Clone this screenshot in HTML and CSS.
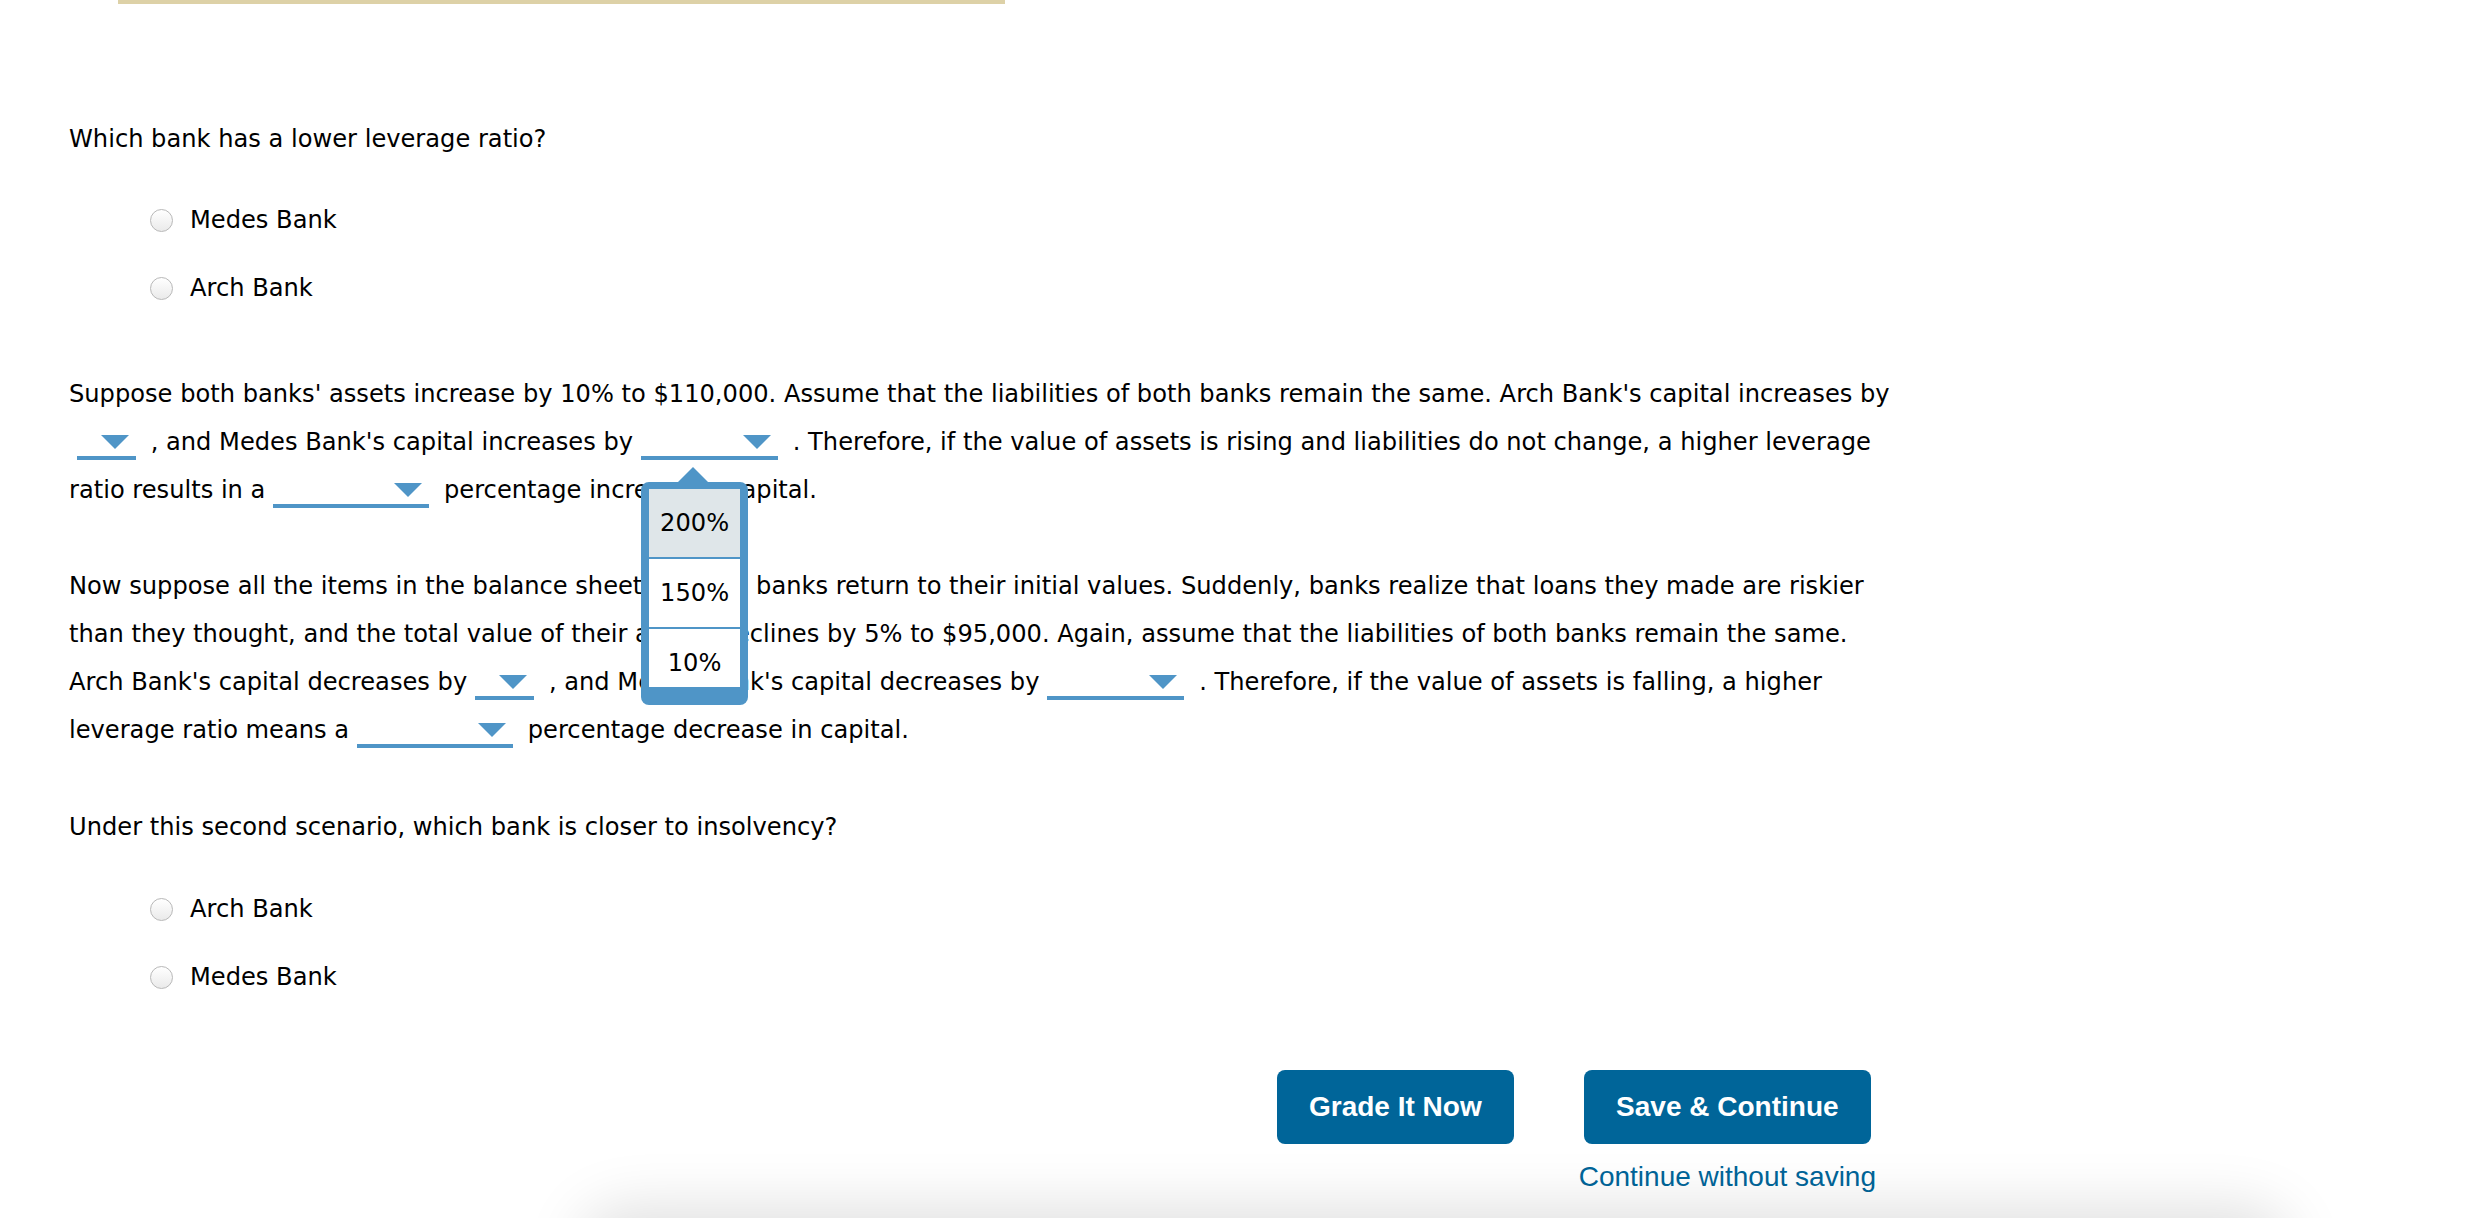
FILE: index.html
```html
<!DOCTYPE html>
<html lang="en">
<head>
    <meta charset="UTF-8">
    <meta name="viewport" content="width=device-width, initial-scale=1.0">
    <title>Bank Leverage</title>
    <link rel="stylesheet" href="styles.css">
</head>
<body>
    <div class="header-rule"></div>

    <main class="question">
        <p class="prompt">Which bank has a lower leverage ratio?</p>
        <ul class="choices">
            <li><input type="radio" name="q1"> Medes Bank</li>
            <li><input type="radio" name="q1"> Arch Bank</li>
        </ul>

        <p class="fill first">Suppose both banks' assets increase by 10% to $110,000. Assume that the liabilities of both banks remain the same. Arch Bank's capital increases by<span class="blank sm"><i class="arrow"></i></span> , and Medes Bank's capital increases by<span class="blank md"><i class="arrow"></i><span class="options"><span class="option active">200%</span><span class="option">150%</span><span class="option">10%</span></span></span> . Therefore, if the value of assets is rising and liabilities do not change, a higher leverage ratio results in a<span class="blank lg"><i class="arrow"></i></span> percentage increase in capital.</p>

        <p class="fill">Now suppose all the items in the balance sheets of both banks return to their initial values. Suddenly, banks realize that loans they made are riskier than they thought, and the total value of their assets declines by 5% to $95,000. Again, assume that the liabilities of both banks remain the same. Arch Bank's capital decreases by<span class="blank sm"><i class="arrow"></i></span> , and Medes Bank's capital decreases by<span class="blank md"><i class="arrow"></i></span> . Therefore, if the value of assets is falling, a higher leverage ratio means a<span class="blank lg"><i class="arrow"></i></span> percentage decrease in capital.</p>

        <p class="prompt second">Under this second scenario, which bank is closer to insolvency?</p>
        <ul class="choices">
            <li><input type="radio" name="q2"> Arch Bank</li>
            <li><input type="radio" name="q2"> Medes Bank</li>
        </ul>

        <div class="actions">
            <button class="btn">Grade It Now</button>
            <div class="save">
                <button class="btn">Save &amp; Continue</button>
                <a href="#" class="skip">Continue without saving</a>
            </div>
        </div>
    </main>

    <div class="dock-shadow"></div>
</body>
</html>
```

FILE: styles.css
```css
body {
    margin: 0;
    font-family: "DejaVu Sans", Verdana, sans-serif;
    font-size: 24.15px;
    line-height: 48px;
    color: #000;
    background: #fff;
}

.header-rule {
    margin-left: 118px;
    width: 887px;
    height: 4px;
    background: #ddd1a7;
}

.question {
    width: 1835px;
    padding: 111px 0 0 69px;
}

p {
    margin: 0;
}

.choices {
    list-style: none;
    margin: 33px 0 0;
    padding: 0 0 0 81px;
}
.choices li {
    display: flex;
    align-items: center;
    gap: 17px;
    height: 48px;
    margin-bottom: 20px;
}
.choices li:last-child {
    margin-bottom: 0;
}
.choices input {
    appearance: none;
    width: 23px;
    height: 23px;
    margin: 0;
    border: 1px solid #b8b8b8;
    border-radius: 50%;
    background: linear-gradient(#fff, #eaeaea);
}

.fill {
    margin-top: 48px;
}
.fill.first {
    margin-top: 58px;
}
.prompt.second {
    margin-top: 49px;
}
.prompt.second + .choices {
    margin-top: 34px;
}

/* inline answer blanks */
.blank {
    position: relative;
    display: inline-block;
    height: 26px;
    margin: 0 7px 0 8px;
    border-bottom: 4px solid #4f95c7;
    vertical-align: -10px;
}
.blank.sm { width: 59px; }
.blank.md { width: 137px; }
.blank.lg { width: 156px; }

.arrow {
    position: absolute;
    top: 5px;
    right: 7px;
    width: 0;
    height: 0;
    border-left: 14px solid transparent;
    border-right: 14px solid transparent;
    border-top: 14px solid #4f95c7;
}

/* open list */
.options {
    position: absolute;
    top: 52px;
    left: 0;
    z-index: 2;
    display: flex;
    flex-direction: column;
    gap: 2px;
    width: 107px;
    height: 223px;
    box-sizing: border-box;
    padding: 7px 8px 18px;
    background: #4f95c7;
    border-radius: 8px;
}
.options::before {
    content: "";
    position: absolute;
    top: -15px;
    left: 37px;
    border-left: 15px solid transparent;
    border-right: 15px solid transparent;
    border-bottom: 15px solid #4f95c7;
}
.option {
    flex: none;
    height: 68px;
    line-height: 68px;
    text-align: center;
    background: #fff;
}
.option:last-child {
    height: 58px;
    overflow: hidden;
}
.option.active {
    background: #dfe6e9;
}

/* buttons */
.actions {
    display: flex;
    justify-content: flex-end;
    align-items: flex-start;
    gap: 65px;
    margin-top: 69px;
    padding-right: 28px;
}
.save {
    display: flex;
    flex-direction: column;
    align-items: center;
}
.btn {
    height: 74px;
    padding: 0 32px;
    border: none;
    border-radius: 8px;
    background: #006599;
    color: #fff;
    font-family: "Liberation Sans", Arial, sans-serif;
    font-size: 28px;
    font-weight: bold;
    cursor: pointer;
}
.skip {
    margin-top: 17px;
    font-family: "Liberation Sans", Arial, sans-serif;
    font-size: 28px;
    line-height: 32px;
    color: #006599;
    text-decoration: none;
}

.dock-shadow {
    position: fixed;
    left: 590px;
    right: 190px;
    bottom: -70px;
    height: 70px;
    border-radius: 60px;
    box-shadow: 0 0 60px 10px rgba(0, 0, 0, 0.13);
}
```
